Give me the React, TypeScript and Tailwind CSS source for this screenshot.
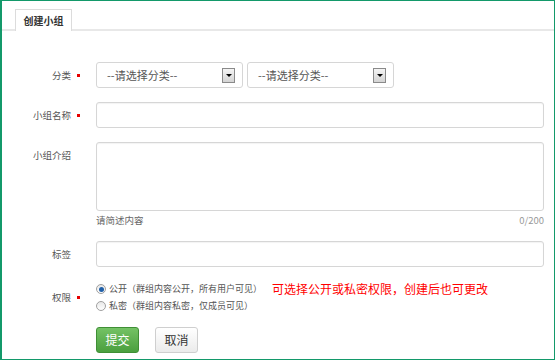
const font = { fontFamily: '"Noto Sans CJK SC", "Noto Sans", sans-serif' };

function Label({ text, required }: { text: string; required?: boolean }) {
  return (
    <div className="flex w-[94px] shrink-0 items-center justify-end text-[9.5px] text-[#555]">
      <span>{text}</span>
      <span className="flex w-[25px] items-center">
        {required && <span className="ml-[6px] h-[3px] w-[3px] bg-[#e60000]" />}
      </span>
    </div>
  );
}

function Select() {
  return (
    <div className="flex h-[26px] w-[147px] items-center justify-between rounded-[3px] border border-[#d6d6d6] bg-white pl-[10px] pr-[7px] text-[11px] text-[#555]">
      <span>--请选择分类--</span>
      <span className="flex h-[15px] w-[13px] items-center justify-center border border-[#8a8a8a] bg-gradient-to-b from-[#f4f4f4] to-[#d4d4d4]">
        <span className="h-0 w-0 border-x-[3px] border-t-[3px] border-x-transparent border-t-black" />
      </span>
    </div>
  );
}

function Radio({ checked, text }: { checked?: boolean; text: string }) {
  return (
    <div className="flex items-center gap-[3px] text-[9px] text-[#555]">
      <span className="flex h-[10px] w-[10px] items-center justify-center rounded-full border border-[#a0a0a0] bg-gradient-to-b from-[#e8e8e8] to-white">
        {checked && <span className="h-[5px] w-[5px] rounded-full bg-[#1f5fa8]" />}
      </span>
      <span>{text}</span>
    </div>
  );
}

export default function App() {
  return (
    <div style={font} className="h-[360px] w-[555px] border border-l-2 border-[#13996a] bg-white">
      <div className="mt-[8px] flex border-b-2 border-[#e8e8e8] pl-[13px] pr-[2px]">
        <div className="-mb-[2px] flex h-[22px] w-[57px] items-center justify-center border border-b-0 border-[#dcdcdc] bg-white text-[10px] font-bold text-[#333]">
          创建小组
        </div>
      </div>

      <div className="mt-[31px] flex flex-col pr-[10px]">
        <div className="flex h-[26px]">
          <Label text="分类" required />
          <div className="flex gap-[4px]">
            <Select />
            <Select />
          </div>
        </div>

        <div className="mt-[14px] flex h-[26px]">
          <Label text="小组名称" required />
          <div className="flex-1 rounded-[3px] border border-[#d6d6d6] bg-white shadow-[inset_0_1px_1px_rgba(0,0,0,0.05)]" />
        </div>

        <div className="mt-[14px] flex">
          <div className="flex h-[26px] items-start pt-[6px]">
            <Label text="小组介绍" />
          </div>
          <div className="flex flex-1 flex-col">
            <div className="h-[69px] rounded-[3px] border border-[#d6d6d6] bg-white shadow-[inset_0_1px_1px_rgba(0,0,0,0.05)]" />
            <div className="mt-[2px] flex justify-between text-[9.5px] leading-[14px]">
              <span className="text-[#666]">请简述内容</span>
              <span className="text-[#999]">0/200</span>
            </div>
          </div>
        </div>

        <div className="mt-[14px] flex h-[26px]">
          <Label text="标签" />
          <div className="flex-1 rounded-[3px] border border-[#d6d6d6] bg-white shadow-[inset_0_1px_1px_rgba(0,0,0,0.05)]" />
        </div>

        <div className="mt-[15px] flex">
          <Label text="权限" required />
          <div className="flex flex-col gap-[3px]">
            <div className="flex items-center">
              <Radio checked text="公开（群组内容公开，所有用户可见）" />
              <span className="ml-[10px] text-[12px] leading-[14px] text-[#f00]">可选择公开或私密权限，创建后也可更改</span>
            </div>
            <Radio text="私密（群组内容私密，仅成员可见）" />
          </div>
        </div>

        <div className="mt-[14px] flex gap-[16px] pl-[94px]">
          <button className="h-[26px] w-[43px] rounded-[3px] border border-[#3f8f35] bg-gradient-to-b from-[#74c265] to-[#4a9f3e] text-[12px] text-white">
            提交
          </button>
          <button className="h-[26px] w-[43px] rounded-[3px] border border-[#cfcfcf] bg-gradient-to-b from-white to-[#ebebeb] text-[12px] text-[#333]">
            取消
          </button>
        </div>
      </div>
    </div>
  );
}
